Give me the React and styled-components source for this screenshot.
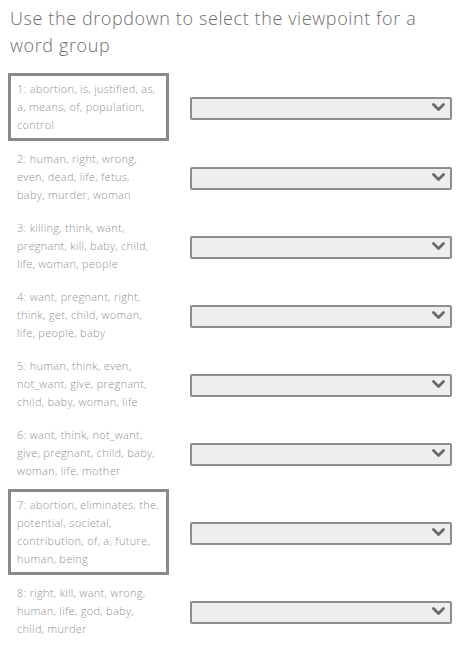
import React from "react";
import styled, { createGlobalStyle } from "styled-components";

const GlobalStyle = createGlobalStyle`
  body {
    margin: 5px 8px 8px;
    background: #fff;
    font-family: "Open Sans", "Liberation Sans", sans-serif;
  }
`;

const Page = styled.div`
  width: 444px;
`;

const Heading = styled.h2`
  margin: 0 0 14px;
  padding: 0 2px;
  font-size: 18px;
  font-weight: 300;
  line-height: 27px;
  color: #6f6f6f;
  letter-spacing: 0.6px;
`;

const List = styled.div`
  display: flex;
  flex-direction: column;
  gap: 3px;
`;

const Row = styled.div`
  display: flex;
  align-items: center;
  gap: 21px;
`;

const Words = styled.div`
  box-sizing: border-box;
  width: 161px;
  flex: 0 0 161px;
  padding: ${p => (p.$picked ? "4px 6px" : "3px 6px")};
  border: 3px solid ${p => (p.$picked ? "#8a8a8a" : "transparent")};
  font-size: 11px;
  font-weight: 300;
  line-height: 18px;
  letter-spacing: 0.3px;
  color: #929292;
`;

const SelectWrap = styled.div`
  position: relative;
  flex: 0 0 262px;
  height: 23px;
`;

const Select = styled.select`
  appearance: none;
  box-sizing: border-box;
  width: 100%;
  height: 100%;
  margin: 0;
  border: 2px solid #8d8d8d;
  border-radius: 2px;
  background: #eeeeee;
  font-family: inherit;
  font-size: 12px;
  color: #555;
  padding: 0 28px 0 6px;
`;

const Chevron = styled.svg`
  position: absolute;
  right: 7px;
  top: 6px;
  width: 13px;
  height: 10px;
  pointer-events: none;
`;

const groups = [
  { text: "1: abortion, is, justified, as, a, means, of, population, control", picked: true },
  { text: "2: human, right, wrong, even, dead, life, fetus, baby, murder, woman" },
  { text: "3: killing, think, want, pregnant, kill, baby, child, life, woman, people" },
  { text: "4: want, pregnant, right, think, get, child, woman, life, people, baby" },
  { text: "5: human, think, even, not_want, give, pregnant, child, baby, woman, life" },
  { text: "6: want, think, not_want, give, pregnant, child, baby, woman, life, mother" },
  { text: "7: abortion, eliminates, the, potential, societal, contribution, of, a, future, human, being", picked: true },
  { text: "8: right, kill, want, wrong, human, life, god, baby, child, murder" },
];

function ViewpointSelect() {
  return (
    <SelectWrap>
      <Select defaultValue="">
        <option value=""></option>
        <option value="pro">Pro-choice</option>
        <option value="life">Pro-life</option>
        <option value="neutral">Neutral</option>
      </Select>
      <Chevron viewBox="0 0 13 10" aria-hidden="true">
        <path d="M1.5 2.5 L6.5 7.5 L11.5 2.5" fill="none" stroke="#6a6a6a" strokeWidth="2.8" strokeLinecap="round" strokeLinejoin="round" />
      </Chevron>
    </SelectWrap>
  );
}

export default function App() {
  return (
    <Page>
      <GlobalStyle />
      <Heading>Use the dropdown to select the viewpoint for a word group</Heading>
      <List>
        {groups.map(g => (
          <Row key={g.text}>
            <Words $picked={g.picked}>{g.text}</Words>
            <ViewpointSelect />
          </Row>
        ))}
      </List>
    </Page>
  );
}
